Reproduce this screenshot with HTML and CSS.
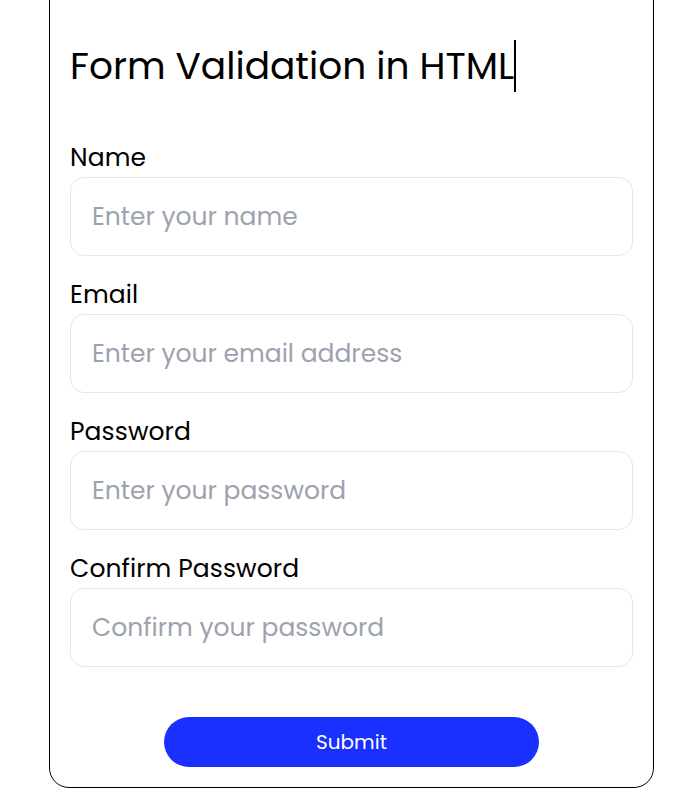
FILE: index.html
```html
<!DOCTYPE html>
<html lang="en">
<head>
<meta charset="utf-8">
<title>Form Validation in HTML</title>
<link rel="stylesheet" href="styles.css">
</head>
<body>
<div class="card">
  <h1 class="title">Form Validation in HTML</h1>
  <form class="form">
    <div class="field">
      <label class="label" for="name">Name</label>
      <input class="input" id="name" type="text" placeholder="Enter your name">
    </div>
    <div class="field">
      <label class="label" for="email">Email</label>
      <input class="input" id="email" type="email" placeholder="Enter your email address">
    </div>
    <div class="field">
      <label class="label" for="password">Password</label>
      <input class="input" id="password" type="password" placeholder="Enter your password">
    </div>
    <div class="field">
      <label class="label" for="confirm">Confirm Password</label>
      <input class="input" id="confirm" type="password" placeholder="Confirm your password">
    </div>
    <div class="actions">
      <button class="submit" type="button">Submit</button>
    </div>
  </form>
</div>
</body>
</html>
```
FILE: styles.css
```css
* { box-sizing: border-box; }
html, body { margin: 0; padding: 0; background: #fff; }
body {
  font-family: "Poppins", "Inter", sans-serif;
  color: #000;
  overflow: hidden;
}
.card {
  margin: -40px 0 0 49px;
  width: 605px;
  border: 1px solid #000;
  border-radius: 20px;
  padding: 79px 20px 20px;
}
.title {
  display: inline-block;
  margin: 0 0 51px;
  font-size: 37.5px;
  font-weight: 400;
  line-height: 52px;
  white-space: nowrap;
  border-right: 2px solid #000;
}
.form {
  display: flex;
  flex-direction: column;
  gap: 24px;
}
.field {
  display: flex;
  flex-direction: column;
  gap: 4px;
}
.label {
  font-size: 25px;
  font-weight: 400;
  line-height: 30px;
  letter-spacing: 0.1px;
}
.input {
  height: 79px;
  width: 100%;
  border: 1px solid #e5e7eb;
  border-radius: 14px;
  padding: 0 21px;
  font-family: inherit;
  font-size: 25px;
  color: #111;
  outline: none;
}
.input::placeholder { color: #9ca3af; }
.actions {
  display: flex;
  justify-content: center;
  padding-top: 26px;
}
.submit {
  width: 375px;
  height: 50px;
  border: none;
  border-radius: 25px;
  background: #1a30ff;
  color: #fff;
  font-family: inherit;
  font-size: 20px;
  cursor: pointer;
}
```
